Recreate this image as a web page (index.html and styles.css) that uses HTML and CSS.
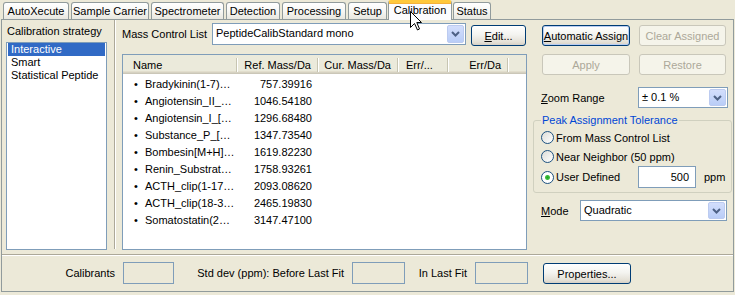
FILE: index.html
```html
<!DOCTYPE html>
<html lang="en">
<head>
    <meta charset="UTF-8">
    <title>Calibration</title>
    <link rel="stylesheet" href="styles.css">
</head>
<body>
    <div class="window">
        <div class="tabs">
            <div class="tab t-auto">AutoXecute</div>
            <div class="tab t-sample">Sample Carrier</div>
            <div class="tab t-spec">Spectrometer</div>
            <div class="tab t-det">Detection</div>
            <div class="tab t-proc">Processing</div>
            <div class="tab t-setup">Setup</div>
            <div class="tab t-calib active">Calibration</div>
            <div class="tab t-status">Status</div>
        </div>

        <div class="pane">
            <div class="main">
                <div class="strategy">
                    <div class="caption">Calibration strategy</div>
                    <div class="listbox">
                        <div class="item selected">Interactive</div>
                        <div class="item">Smart</div>
                        <div class="item">Statistical Peptide</div>
                    </div>
                </div>

                <div class="splitter"></div>

                <div class="center">
                    <div class="toolbar">
                        <span class="field-label">Mass Control List</span>
                        <div class="combo combo-list">
                            <span class="combo-text">PeptideCalibStandard mono</span>
                            <span class="drop"><svg width="11" height="8" viewBox="0 0 11 8"><path d="M2 2 L5.5 5.5 L9 2" fill="none" stroke="#4d6185" stroke-width="2"/></svg></span>
                        </div>
                        <button class="btn btn-edit"><u>E</u>dit...</button>
                    </div>

                    <div class="listview">
                        <div class="lv-header">
                            <div class="col c-name">Name</div>
                            <div class="col c-ref">Ref. Mass/Da</div>
                            <div class="col c-cur">Cur. Mass/Da</div>
                            <div class="col c-err">Err/...</div>
                            <div class="col c-errda">Err/Da</div>
                        </div>
                        <div class="lv-body">
                            <div class="lv-row"><div class="col c-name"><span class="bullet">•</span>Bradykinin(1-7)…</div><div class="col c-ref">757.39916</div></div>
                            <div class="lv-row"><div class="col c-name"><span class="bullet">•</span>Angiotensin_II_…</div><div class="col c-ref">1046.54180</div></div>
                            <div class="lv-row"><div class="col c-name"><span class="bullet">•</span>Angiotensin_I_[…</div><div class="col c-ref">1296.68480</div></div>
                            <div class="lv-row"><div class="col c-name"><span class="bullet">•</span>Substance_P_[…</div><div class="col c-ref">1347.73540</div></div>
                            <div class="lv-row"><div class="col c-name"><span class="bullet">•</span>Bombesin[M+H]…</div><div class="col c-ref">1619.82230</div></div>
                            <div class="lv-row"><div class="col c-name"><span class="bullet">•</span>Renin_Substrat…</div><div class="col c-ref">1758.93261</div></div>
                            <div class="lv-row"><div class="col c-name"><span class="bullet">•</span>ACTH_clip(1-17…</div><div class="col c-ref">2093.08620</div></div>
                            <div class="lv-row"><div class="col c-name"><span class="bullet">•</span>ACTH_clip(18-3…</div><div class="col c-ref">2465.19830</div></div>
                            <div class="lv-row"><div class="col c-name"><span class="bullet">•</span>Somatostatin(2…</div><div class="col c-ref">3147.47100</div></div>
                        </div>
                    </div>
                </div>

                <div class="side">
                    <div class="btn-row">
                        <button class="btn btn-wide btn-default"><u>A</u>utomatic Assign</button>
                        <button class="btn btn-narrow" disabled>Clear Assigned</button>
                    </div>
                    <div class="btn-row second">
                        <button class="btn btn-wide" disabled>Apply</button>
                        <button class="btn btn-narrow" disabled>Restore</button>
                    </div>

                    <div class="opt-row zoom-row">
                        <span class="opt-label zoom-label"><u>Z</u>oom Range</span>
                        <div class="combo combo-zoom">
                            <span class="combo-text">± 0.1 %</span>
                            <span class="drop"><svg width="11" height="8" viewBox="0 0 11 8"><path d="M2 2 L5.5 5.5 L9 2" fill="none" stroke="#4d6185" stroke-width="2"/></svg></span>
                        </div>
                    </div>

                    <fieldset class="group">
                        <legend>Peak Assignment Tolerance</legend>
                        <div class="radio-row">
                            <span class="radio"></span>
                            <span>From Mass Control List</span>
                        </div>
                        <div class="radio-row">
                            <span class="radio"></span>
                            <span>Near Neighbor (50 ppm)</span>
                        </div>
                        <div class="radio-row user-row">
                            <span class="radio checked"></span>
                            <span class="radio-text">User Defined</span>
                            <div class="textbox">500</div>
                            <span class="unit">ppm</span>
                        </div>
                    </fieldset>

                    <div class="opt-row mode-row">
                        <span class="opt-label mode-label"><u>M</u>ode</span>
                        <div class="combo combo-mode">
                            <span class="combo-text">Quadratic</span>
                            <span class="drop"><svg width="11" height="8" viewBox="0 0 11 8"><path d="M2 2 L5.5 5.5 L9 2" fill="none" stroke="#4d6185" stroke-width="2"/></svg></span>
                        </div>
                    </div>
                </div>
            </div>

            <div class="footer">
                <span class="foot-label l-calib">Calibrants</span>
                <div class="foot-box b-calib"></div>
                <span class="foot-label l-before">Std dev (ppm): Before Last Fit</span>
                <div class="foot-box"></div>
                <span class="foot-label l-last">In Last Fit</span>
                <div class="foot-box"></div>
                <button class="btn btn-props">Properties...</button>
            </div>
        </div>

        <!-- mouse pointer caught in the screenshot -->
        <svg class="cursor" width="13" height="20" viewBox="0 0 13 20">
            <path d="M0.5 0.5 L0.5 16.5 L4.5 12.5 L7.5 19 L9.5 18 L6.8 11.5 L11.5 11.5 Z" fill="#fff" stroke="#000" stroke-width="1"/>
        </svg>
    </div>
</body>
</html>
```

FILE: styles.css
```css
* {
    margin: 0;
    padding: 0;
    box-sizing: border-box;
}

body {
    background-color: #ece9d8;
    font-family: Tahoma, "Liberation Sans", sans-serif;
    font-size: 11px;
    color: #000;
    width: 735px;
    height: 295px;
    overflow: hidden;
}

.window {
    position: relative;
    width: 735px;
    height: 295px;
}

/* tab strip */

.tabs {
    display: flex;
    align-items: flex-end;
    gap: 2px;
    height: 19px;
    padding-left: 3px;
}

.tab {
    height: 17px;
    line-height: 16px;
    border: 1px solid #919b9c;
    border-bottom: none;
    border-radius: 3px 3px 0 0;
    background: linear-gradient(#ffffff, #f7f7f4 50%, #e8e7df);
    text-align: center;
    white-space: nowrap;
}

.t-auto { width: 66px; }
.t-sample { width: 78px; }
.t-spec { width: 73px; }
.t-det { width: 54px; }
.t-proc { width: 64px; }
.t-setup { width: 39px; }
.t-calib { width: 64px; }
.t-status { width: 38px; }

.tab.active {
    position: relative;
    z-index: 1;
    height: 20px;
    line-height: 14px;
    margin: 0 -1px -1px -1px;
    border-top: 3px solid #ffc83c;
    background: #fcfcfe;
    box-shadow: inset 0 1px 0 #f5b13b;
}

/* page */

.pane {
    width: 733px;
    height: 273px;
    margin-left: 1px;
    border: 1px solid #919b9c;
    background-color: #ece9d8;
}

.main {
    display: flex;
    height: 234px;
}

.strategy {
    width: 111px;
    padding: 5px 0 0 4px;
}

.caption {
    line-height: 13px;
    padding-left: 1px;
    margin-bottom: 4px;
}

.listbox {
    width: 101px;
    height: 208px;
    padding: 0 1px;
    border: 1px solid #7f9db9;
    background-color: #fff;
}

.item {
    height: 13px;
    line-height: 13px;
    padding-left: 3px;
}

.item.selected {
    background-color: #316ac5;
    color: #fff;
}

.splitter {
    width: 2px;
    height: 229px;
    margin-left: 1px;
    border-left: 1px solid #aca899;
    border-right: 1px solid #fff;
}

.center {
    width: 411px;
    padding-left: 6px;
}

.toolbar {
    display: flex;
    align-items: flex-start;
    height: 22px;
    margin-top: 3px;
}

.field-label {
    width: 90px;
    line-height: 22px;
}

/* combo boxes */

.combo {
    display: flex;
    height: 21px;
    padding: 1px;
    border: 1px solid #7f9db9;
    background-color: #fff;
}

.combo-text {
    flex: 1;
    line-height: 17px;
    padding-left: 2px;
    white-space: nowrap;
}

.drop {
    display: flex;
    align-items: center;
    justify-content: center;
    width: 17px;
    border: 1px solid #bccbf0;
    border-radius: 2px;
    background: linear-gradient(#d3defc, #b9cdf7);
}

.combo-list {
    width: 254px;
    height: 22px;
}

.combo-zoom {
    width: 90px;
}

.combo-mode {
    width: 147px;
}

/* buttons */

.btn {
    height: 21px;
    padding: 0;
    border: 1px solid #003c74;
    border-radius: 3px;
    background: linear-gradient(#ffffff, #f4f4f0 45%, #e4e0d6 85%, #d6d0c5);
    font-family: inherit;
    font-size: 11px;
    color: #000;
    white-space: nowrap;
}

.btn:disabled {
    border-color: #c9c7ba;
    background: #f5f4ea;
    color: #aca899;
}

.btn-default {
    box-shadow: inset 0 0 0 1px #b9cdf2;
}

.btn-edit {
    width: 55px;
    margin: 2px 0 0 5px;
}

/* list view */

.listview {
    width: 405px;
    height: 196px;
    margin-top: 9px;
    border: 1px solid #7f9db9;
    background-color: #fff;
}

.lv-header {
    display: flex;
    align-items: center;
    height: 19px;
    background-color: #ebeadb;
    box-shadow: inset 0 -1px 0 #cbc7b8, inset 0 -2px 0 #d6d2c2, inset 0 -3px 0 #e2decd;
}

.lv-header .col {
    height: 14px;
    line-height: 14px;
    border-right: 1px solid #c7c5b2;
    box-shadow: 1px 0 0 #fff;
}

.col {
    white-space: nowrap;
    overflow: hidden;
}

.c-name {
    width: 114px;
    padding-left: 10px;
}

.c-ref {
    width: 81px;
    padding-right: 6px;
    text-align: right;
}

.c-cur {
    width: 80px;
    padding-right: 6px;
    text-align: right;
}

.c-err {
    width: 50px;
    padding-left: 8px;
}

.c-errda {
    width: 60px;
    padding-right: 6px;
    text-align: right;
}

.lv-body {
    padding-top: 2px;
}

.lv-row {
    display: flex;
    height: 17px;
    line-height: 17px;
}

.lv-row .c-name {
    padding-left: 11px;
}

.bullet {
    display: inline-block;
    width: 11px;
}

/* right hand column */

.side {
    width: 197px;
    margin-left: 6px;
    padding-top: 5px;
}

.btn-row {
    display: flex;
    gap: 9px;
    padding-left: 9px;
}

.btn-row.second {
    margin-top: 8px;
}

.btn-wide {
    width: 88px;
}

.btn-narrow {
    width: 87px;
}

.opt-row {
    display: flex;
    align-items: center;
    padding-left: 8px;
}

.zoom-row {
    margin-top: 12px;
}

.zoom-label {
    width: 97px;
}

.mode-row {
    margin-top: 7px;
}

.mode-label {
    width: 39px;
}

.group {
    width: 197px;
    height: 79px;
    margin-top: 6px;
    padding: 1px 6px 3px 7px;
    border: 1px solid #d0d0bf;
    border-radius: 3px;
}

.group legend {
    padding: 0 1px;
    line-height: 13px;
    color: #0046d5;
}

.radio-row {
    display: flex;
    align-items: center;
    height: 19px;
}

.user-row {
    height: 22px;
}

.radio {
    width: 13px;
    height: 13px;
    margin-right: 2px;
    border: 1px solid #1c5180;
    border-radius: 50%;
    background: linear-gradient(135deg, #dcdcd7, #ffffff);
}

.radio.checked {
    background: radial-gradient(circle, #21a121 0, #3fbf3f 2px, #ffffff 3px);
}

.radio-text {
    width: 82px;
}

.textbox {
    width: 58px;
    height: 22px;
    line-height: 20px;
    padding-right: 6px;
    border: 1px solid #7f9db9;
    background-color: #fff;
    text-align: right;
}

.unit {
    margin-left: 8px;
}

/* footer strip */

.footer {
    display: flex;
    align-items: flex-start;
    height: 37px;
    padding-top: 7px;
    border-top: 1px solid #aca899;
    box-shadow: inset 0 1px 0 #fff;
}

.foot-label {
    line-height: 22px;
    text-align: right;
    white-space: nowrap;
}

.l-calib {
    width: 113px;
}

.l-before {
    width: 170px;
}

.l-last {
    width: 62px;
}

.foot-box {
    width: 53px;
    height: 22px;
    margin-left: 8px;
    border: 1px solid #7f9db9;
}

.b-calib {
    width: 51px;
}

.btn-props {
    width: 88px;
    margin: 1px 0 0 15px;
}

.cursor {
    position: absolute;
    left: 410px;
    top: 11px;
    z-index: 2;
}
```
